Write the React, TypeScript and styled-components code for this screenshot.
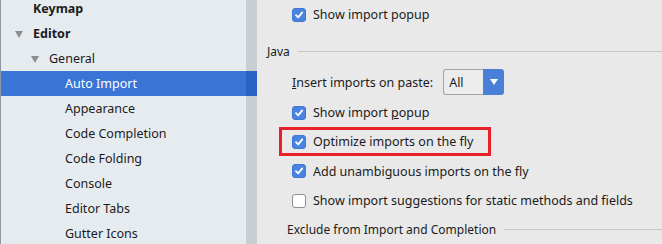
import React from 'react';
import styled, { createGlobalStyle } from 'styled-components';

const GlobalStyle = createGlobalStyle`
  html, body {
    margin: 0;
    padding: 0;
    overflow: hidden;
  }
  body {
    font-family: 'Noto Sans', 'Open Sans', sans-serif;
    font-size: 12.5px;
    color: #1b1b1b;
  }
`;

const Window = styled.div`
  display: flex;
  width: 662px;
  height: 244px;
  overflow: hidden;
  background: #e9e9e9;
`;

const Sidebar = styled.div`
  width: 245px;
  flex-shrink: 0;
  background: #e6ebf0;
  border-left: 1px solid #8c98a3;
  display: flex;
  flex-direction: column;
  margin-top: -4px;
`;

const TreeRow = styled.div<{ $level: number; $selected?: boolean; $bold?: boolean }>`
  height: 25px;
  flex-shrink: 0;
  display: flex;
  align-items: center;
  padding-left: ${(p) => 14 + p.$level * 16}px;
  background: ${(p) => (p.$selected ? '#3875d7' : 'transparent')};
  color: ${(p) => (p.$selected ? '#ffffff' : '#1b1b1b')};
  font-weight: ${(p) => (p.$bold ? 700 : 400)};
  white-space: nowrap;
`;

const Arrow = styled.span<{ $hidden?: boolean }>`
  width: 0;
  height: 0;
  border-left: 4px solid transparent;
  border-right: 4px solid transparent;
  border-top: 7px solid ${(p) => (p.$hidden ? 'transparent' : '#8e8e8e')};
  margin-right: 10px;
  margin-top: 1px;
`;

const ScrollStrip = styled.div`
  width: 11px;
  flex-shrink: 0;
  background: #c9ced3;
  display: flex;
  flex-direction: column;
  margin-top: -4px;
`;

const StripCell = styled.div<{ $selected?: boolean }>`
  height: 25px;
  flex-shrink: 0;
  background: ${(p) => (p.$selected ? '#2b63c4' : 'transparent')};
`;

const Content = styled.div`
  flex: 1;
  display: flex;
  flex-direction: column;
  padding-left: 10px;
  padding-top: 0;
`;

const OptionRow = styled.label<{ $indent?: number; $height?: number }>`
  display: flex;
  align-items: center;
  height: ${(p) => p.$height ?? 29}px;
  padding-left: ${(p) => p.$indent ?? 25}px;
  white-space: nowrap;
`;

const Box = styled.span<{ $checked: boolean }>`
  width: 14px;
  height: 14px;
  box-sizing: border-box;
  border-radius: 3px;
  margin-right: 7px;
  display: flex;
  align-items: center;
  justify-content: center;
  background: ${(p) => (p.$checked ? '#4a84e0' : '#ffffff')};
  border: 1px solid ${(p) => (p.$checked ? '#3f78d4' : '#8f8f8f')};
`;

const Check = ({ checked }: { checked: boolean }) => (
  <Box $checked={checked}>
    {checked && (
      <svg width="10" height="10" viewBox="0 0 10 10">
        <path d="M2 5.2 L4.2 7.4 L8.2 2.4" fill="none" stroke="#fff" strokeWidth="1.8" strokeLinecap="round" strokeLinejoin="round" />
      </svg>
    )}
  </Box>
);

const GroupTitle = styled.div<{ $indent: number }>`
  display: flex;
  align-items: center;
  height: 29px;
  padding-left: ${(p) => p.$indent}px;
  white-space: nowrap;
  font-size: 12px;
  &::after {
    content: '';
    flex: 1;
    height: 1px;
    background: #c8c8c8;
    margin-left: 8px;
  }
`;

const Spacer = styled.div<{ $h: number }>`
  height: ${(p) => p.$h}px;
  flex-shrink: 0;
`;

const Highlight = styled.div`
  margin-left: 12px;
  width: 212px;
  height: 29px;
  box-sizing: border-box;
  border: 3px solid #e8202a;
  display: flex;
  align-items: center;
  padding-left: 10px;
  white-space: nowrap;
`;

const Combo = styled.div`
  display: flex;
  height: 26px;
  margin-left: 10px;
  box-sizing: border-box;
`;

const ComboValue = styled.div`
  width: 40px;
  box-sizing: border-box;
  border: 1px solid #a5a5a5;
  border-right: none;
  border-radius: 3px 0 0 3px;
  background: #ececec;
  display: flex;
  align-items: center;
  padding-left: 5px;
`;

const ComboButton = styled.div`
  width: 21px;
  background: #4a7fd8;
  border-radius: 0 3px 3px 0;
  display: flex;
  align-items: center;
  justify-content: center;
  &::before {
    content: '';
    border-left: 4px solid transparent;
    border-right: 4px solid transparent;
    border-top: 6px solid #ffffff;
  }
`;

const tree = [
  { label: 'Keymap', level: 1, bold: true },
  { label: 'Editor', level: 0, bold: true, arrow: true },
  { label: 'General', level: 1, arrow: true },
  { label: 'Auto Import', level: 3, selected: true },
  { label: 'Appearance', level: 3 },
  { label: 'Code Completion', level: 3 },
  { label: 'Code Folding', level: 3 },
  { label: 'Console', level: 3 },
  { label: 'Editor Tabs', level: 3 },
  { label: 'Gutter Icons', level: 3 },
];

export default function App() {
  return (
    <>
      <GlobalStyle />
      <Window>
        <Sidebar>
          {tree.map((t) => (
            <TreeRow key={t.label} $level={t.arrow ? t.level : t.level - 1} $selected={t.selected} $bold={t.bold}>
              {t.arrow ? <Arrow /> : <Arrow $hidden />}
              {t.label}
            </TreeRow>
          ))}
        </Sidebar>
        <ScrollStrip>
          {tree.map((t) => (
            <StripCell key={t.label} $selected={t.selected} />
          ))}
        </ScrollStrip>
        <Content>
          <OptionRow $height={29}>
            <Check checked />
            Show import popup
          </OptionRow>
          <Spacer $h={8} />
          <GroupTitle $indent={0}>Java</GroupTitle>
          <OptionRow $height={32}>
            <span>
              <u>I</u>nsert imports on paste:
            </span>
            <Combo>
              <ComboValue>All</ComboValue>
              <ComboButton />
            </Combo>
          </OptionRow>
          <OptionRow $height={29}>
            <Check checked />
            <span>
              Show import <u>p</u>opup
            </span>
          </OptionRow>
          <Highlight>
            <Check checked />
            Optimize imports on the fly
          </Highlight>
          <OptionRow $height={30}>
            <Check checked />
            Add unambiguous imports on the fly
          </OptionRow>
          <OptionRow $height={29}>
            <Check checked={false} />
            Show import suggestions for static methods and fields
          </OptionRow>
          <GroupTitle $indent={20}>Exclude from Import and Completion</GroupTitle>
        </Content>
      </Window>
    </>
  );
}
